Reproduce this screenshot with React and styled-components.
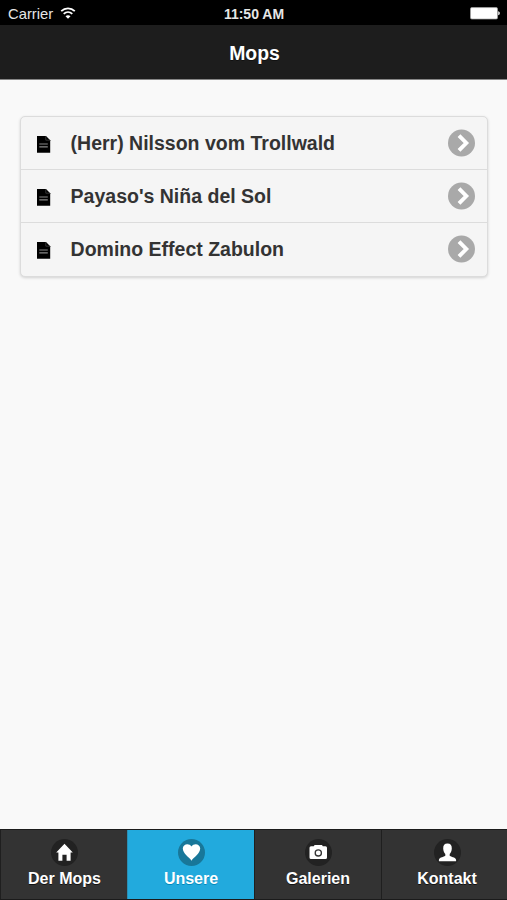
import React from "react";
import styled, { createGlobalStyle } from "styled-components";

const GlobalStyle = createGlobalStyle`
  *, *::before, *::after { box-sizing: border-box; }
  body {
    margin: 0;
    background: #f9f9f9;
    font-family: "Liberation Sans", Arial, Helvetica, sans-serif;
  }
`;

const Screen = styled.div`
  display: flex;
  flex-direction: column;
  height: 100vh;
  overflow: hidden;
  background: #f9f9f9;
`;

const StatusBar = styled.div`
  display: grid;
  grid-template-columns: 1fr auto 1fr;
  align-items: center;
  flex: none;
  height: 25px;
  padding: 2px 7px 0 8px;
  background: #000;
  color: #e6e6e6;
`;

const Carrier = styled.div`
  display: flex;
  align-items: center;
  gap: 7px;
  font-size: 14.8px;
  line-height: 20px;

  svg {
    margin-bottom: 2px;
  }
`;

const Clock = styled.div`
  font-size: 14px;
  font-weight: 700;
  line-height: 20px;
`;

const BatterySlot = styled.div`
  display: flex;
  justify-content: flex-end;
`;

const Header = styled.header`
  display: flex;
  align-items: center;
  justify-content: center;
  flex: none;
  height: 55px;
  padding: 1px 0 0 2px;
  background: #1d1d1d;
  border-bottom: 1px solid #868686;
`;

const Title = styled.h1`
  margin: 0;
  color: #fff;
  font-size: 19.4px;
  line-height: 26px;
  text-shadow: 0 1px 0 #111;
`;

const Content = styled.main`
  flex: 1;
  padding: 36px 19px 0 20px;
`;

const List = styled.ul`
  margin: 0;
  padding: 0;
  list-style: none;
  background: #f5f5f5;
  border: 1px solid #dcdcdc;
  border-radius: 5px;
  box-shadow: 0 1px 3px rgba(0, 0, 0, 0.16);
`;

const Row = styled.li`
  display: flex;
  align-items: center;
  height: 53px;
  padding: 0 12px 0 15px;

  &:not(:last-child) {
    border-bottom: 1px solid #dcdcdc;
  }

  &:last-child {
    padding-bottom: 1px;
  }
`;

const RowLabel = styled.span`
  flex: 1;
  margin-left: 19.6px;
  color: #333;
  font-size: 19.5px;
  font-weight: 700;
  line-height: 26px;
  text-shadow: 0 1px 0 #f3f3f3;
`;

const TabBar = styled.nav`
  display: grid;
  grid-template-columns: 127px 127px 127px 1fr;
  flex: none;
  height: 71px;
  border: solid #1b1b1b;
  border-width: 1px 0;
`;

const Tab = styled.a`
  display: flex;
  flex-direction: column;
  align-items: center;
  padding-top: 9px;
  padding-left: ${({ $shift }) => $shift || 0}px;
  background: ${({ $active }) => ($active ? "#22aadd" : "#333")};
  border-left: 1px solid ${({ $active }) => ($active ? "#2b8fb4" : "#1f1f1f")};
  color: #fff;
  font-size: 16px;
  font-weight: 700;
  line-height: 20px;
  text-shadow: 0 1px 0 ${({ $active }) => ($active ? "#0088bb" : "#111")};
`;

const TabIcon = styled.span`
  display: flex;
  align-items: center;
  justify-content: center;
  width: 27px;
  height: 27px;
  margin-bottom: 3px;
  border-radius: 50%;
  background: ${({ $active }) => ($active ? "#187799" : "#222")};
`;

const WifiIcon = () => (
  <svg width="16" height="12" viewBox="0 0 15 12" fill="none" stroke="#fff" strokeWidth="1.8">
    <path d="M.7 4.1C4.6.4 10.4.4 14.3 4.1" />
    <path d="M3.2 6.8c2.5-2.3 6.1-2.3 8.6 0" />
    <path d="M7.5 11.8 5 9.2c1.4-1.3 3.6-1.3 5 0Z" fill="#fff" stroke="none" />
  </svg>
);

const BatteryIcon = () => (
  <svg width="30" height="13" viewBox="0 0 30 13">
    <rect x=".5" y=".6" width="27" height="11.4" rx="1.3" fill="#fff" stroke="#a8a8a8" strokeWidth=".7" />
    <path d="M28.1 4.3c2.4.4 2.4 3.6 0 4Z" fill="#ddd" />
  </svg>
);

const PageIcon = () => (
  <svg width="15" height="21" viewBox="0 0 15 21">
    <path d="M1 3h9l4.2 4.2V19.8H1Z" fill="#000" />
    <path d="M9.8 3.2v4h4.2" fill="none" stroke="#4a4a4a" strokeWidth=".7" />
    <path d="M3.3 11h8.5M3.3 13.8h8.5" stroke="#888" strokeWidth="1.2" />
  </svg>
);

const ArrowIcon = () => (
  <svg width="27" height="28" viewBox="0 0 27 28">
    <circle cx="13.5" cy="14" r="13.5" fill="#a9a9a9" />
    <path d="m11 6.6 7.3 7.4-7.3 7.4" fill="none" stroke="#fff" strokeWidth="3.9" />
  </svg>
);

const HomeIcon = () => (
  <svg width="19" height="19" viewBox="0 0 19 19">
    <path d="M9.5.8 17.8 9.6h-2.2v8.2h-4v-6H7.4v6h-4V9.6H1.2Z" fill="#fff" />
  </svg>
);

const HeartIcon = () => (
  <svg width="19" height="19" viewBox="0 0 19 19">
    <path d="M9.5 17.7C7.3 14.4.8 10.6.8 5.6.8.7 7.2-.3 9.5 3.5c2.3-3.8 8.7-2.8 8.7 2.1 0 5-6.5 8.8-8.7 12.1Z" fill="#fff" />
  </svg>
);

const CameraIcon = () => (
  <svg width="19" height="17" viewBox="0 0 19 17">
    <path d="M5.6 1.1h7.4l.8 1.2h2.7a1.5 1.5 0 0 1 1.5 1.5v9.8a1.5 1.5 0 0 1-1.5 1.5H2a1.5 1.5 0 0 1-1.5-1.5V3.8A1.5 1.5 0 0 1 2 2.3h2.8Z" fill="#fff" />
    <circle cx="9.3" cy="8.9" r="3.1" fill="none" stroke="#333" strokeWidth="1.3" />
  </svg>
);

const PersonIcon = () => (
  <svg width="19" height="19" viewBox="0 0 19 19">
    <path d="M9.5.5c3 0 4.4 1.9 4.3 4.9-.1 2.6-1 4.3-2.1 5.6v1.8c0 .8 6.4 1.5 6.4 4.1v1.3H.9v-1.3c0-2.6 6.4-3.3 6.4-4.1V11C6.2 9.7 5.3 8 5.2 5.4 5.1 2.4 6.5.5 9.5.5Z" fill="#fff" />
  </svg>
);

const dogs = ["(Herr) Nilsson vom Trollwald", "Payaso's Niña del Sol", "Domino Effect Zabulon"];

const tabs = [
  { label: "Der Mops", Icon: HomeIcon, shift: 1 },
  { label: "Unsere", Icon: HeartIcon },
  { label: "Galerien", Icon: CameraIcon },
  { label: "Kontakt", Icon: PersonIcon, shift: 5 },
];

const activeTab = "Unsere";

export default function App() {
  return (
    <Screen>
      <GlobalStyle />
      <StatusBar>
        <Carrier>
          Carrier
          <WifiIcon />
        </Carrier>
        <Clock>11:50 AM</Clock>
        <BatterySlot>
          <BatteryIcon />
        </BatterySlot>
      </StatusBar>
      <Header>
        <Title>Mops</Title>
      </Header>
      <Content>
        <List>
          {dogs.map((name) => (
            <Row key={name}>
              <PageIcon />
              <RowLabel>{name}</RowLabel>
              <ArrowIcon />
            </Row>
          ))}
        </List>
      </Content>
      <TabBar>
        {tabs.map(({ label, Icon, shift }) => (
          <Tab key={label} $active={label === activeTab} $shift={shift}>
            <TabIcon $active={label === activeTab}>
              <Icon />
            </TabIcon>
            {label}
          </Tab>
        ))}
      </TabBar>
    </Screen>
  );
}
